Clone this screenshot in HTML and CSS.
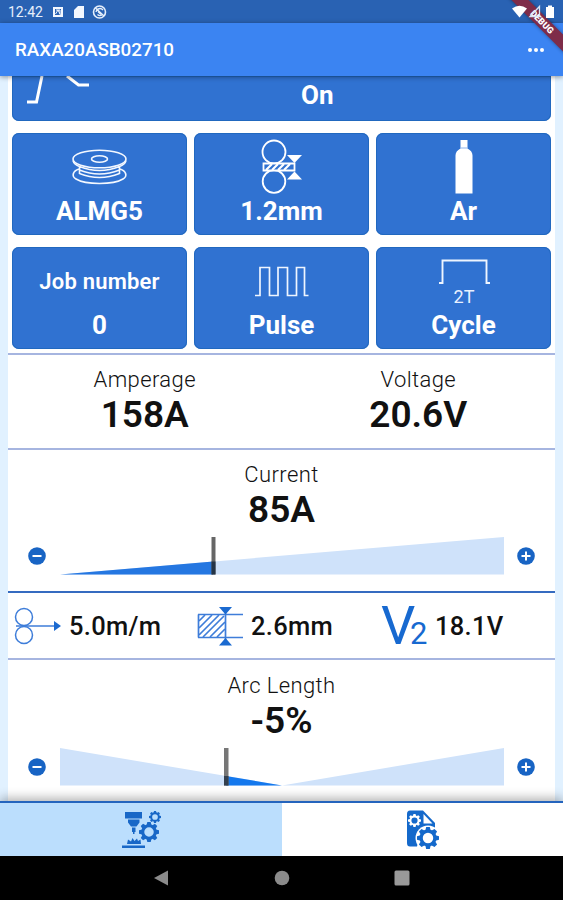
FILE: index.html
```html
<!DOCTYPE html>
<html lang="en">
<head>
<meta charset="utf-8">
<title>RAXA20ASB02710</title>
<link rel="stylesheet" href="styles.css">
</head>
<body>
<svg width="0" height="0" class="defs">
  <symbol id="gear" viewBox="-12 -12 24 24">
    <circle r="7.500" fill="none" stroke="currentColor" stroke-width="3.600"/>
    <g fill="currentColor">
      <path id="tooth" d="M-3-8-2-12H2L3-8Z"/>
      <use href="#tooth" transform="rotate(45)"/><use href="#tooth" transform="rotate(90)"/>
      <use href="#tooth" transform="rotate(135)"/><use href="#tooth" transform="rotate(180)"/>
      <use href="#tooth" transform="rotate(225)"/><use href="#tooth" transform="rotate(270)"/>
      <use href="#tooth" transform="rotate(315)"/>
    </g>
  </symbol>
</svg>
<div class="phone">
  <div class="status">
    <span class="clock">12:42</span>
    <svg class="status-left" width="56" height="14" viewBox="0 0 56 14">
      <path fill="#f4f8ff" fill-rule="evenodd" d="M1 2h10v10H1ZM3 4v6h6V4Z"/><path d="M3.500 9 6 5l2.500 5M4 5h4v4" fill="none" stroke="#f4f8ff" stroke-width="1"/>
      <path fill="#f4f8ff" d="M26 1h6v12H22V5Z"/>
      <circle cx="47.500" cy="7" r="6" fill="none" stroke="#e6effb" stroke-width="1.600"/>
      <path d="M43.500 3 52 11M44 7a4 4 0 0 1 7-2M45.500 9.500q2 2 4.500.5M46 6.500l3 3" fill="none" stroke="#e6effb" stroke-width="1.400"/>
    </svg>
    <svg class="status-right" width="44" height="16" viewBox="0 0 44 16">
      <path fill="#fff" d="M0 4.500Q7.500-1 15 4.500L7.500 13.500Z"/>
      <path d="M18 12.500 27.500 2.500V12.500Z" fill="none" stroke="#d9e5f7" stroke-width="1.300"/>
      <path fill="#fff" d="M36 1.500h4V3h2v11h-8V3H36Z"/>
    </svg>
  </div>
  <div class="appbar"><h1>RAXA20ASB02710</h1><span class="more"><i></i><i></i><i></i></span></div>
  <div class="ribbon">DEBUG</div>

  <main class="screen">
    <div class="panel">
      <section class="tiles">
        <div class="tile wide">
          <svg class="ramp" width="64" height="30" viewBox="0 0 64 30"><path d="M0 26H9.500L15 0M40 0 51.500 9H62" fill="none" stroke="#fff" stroke-width="3"/></svg>
          <b>On</b>
        </div>
        <div class="tile">
          <svg width="58" height="56" viewBox="0 0 58 56" fill="none" stroke="#f3f8ff" stroke-width="1.600">
            <ellipse cx="28.500" cy="21" rx="26.500" ry="8.800"/><ellipse cx="28.500" cy="21" rx="8" ry="3.200"/>
            <path d="M2 22.500q1 4 6.500 6V36M55 22.500q-1 4-6.500 6V36M8.500 28.500q20 8 40 0M8.500 32q20 8 40 0M8.500 35.500q20 8 40 0M8 31C2 33 0 38 5 41c10 6 37 6 47 0 5-3 3-8-3-10"/>
          </svg>
          <b>ALMG5</b>
        </div>
        <div class="tile">
          <svg width="58" height="56" viewBox="0 0 58 56" fill="none" stroke="#fff" stroke-width="1.800">
            <circle cx="21" cy="14" r="11.500"/><circle cx="21" cy="43.500" r="11.300"/>
            <path d="M10.500 25.500h31v7h-31Z" fill="#3072d1"/>
            <path d="m13 32 6-6m0 6 6-6m0 6 6-6m0 6 6-6" stroke-width="2.200"/>
            <path d="M34 17h15L41.500 25Zm0 24.500h15L41.500 33.500Z" fill="#fff" stroke="none"/>
          </svg>
          <b>1.2mm</b>
        </div>
        <div class="tile">
          <svg width="58" height="56" viewBox="0 0 58 56"><path d="M25.500 2h7v8.500q5 2.500 5 7V55.500H20.500V17.500q0-4.500 5-7Z" fill="#fff"/><path d="M25 10h8" stroke="#8fb5ec"/></svg>
          <b>Ar</b>
        </div>
        <div class="tile"><span class="caption">Job number</span><b>0</b></div>
        <div class="tile">
          <svg width="58" height="56" viewBox="0 0 58 56"><path d="M2 43.500H7V15.500H16.500V43.500H25V15.500H34.500V43.500H43.500V15.500H51.500V43.500H55.500" fill="none" stroke="#eef5ff" stroke-width="1.700"/></svg>
          <b>Pulse</b>
        </div>
        <div class="tile">
          <svg width="58" height="56" viewBox="0 0 58 56"><path d="M4 31H7.500V8.500H51.500V31H55" fill="none" stroke="#eef5ff" stroke-width="1.900"/><text x="29" y="51" class="mode">2T</text></svg>
          <b>Cycle</b>
        </div>
      </section>

      <section class="readings">
        <div class="reading"><span>Amperage</span><strong>158A</strong></div>
        <div class="reading"><span>Voltage</span><strong>20.6V</strong></div>
      </section>

      <section class="control current">
        <div class="reading"><span>Current</span><strong>85A</strong></div>
        <div class="slider">
          <button class="step" aria-label="Decrease"><svg width="18" height="18" viewBox="0 0 18 18"><circle cx="9" cy="9" r="8.800"/><path d="M4.500 9h9"/></svg></button>
          <svg class="track" width="444" height="39" viewBox="0 0 444 39">
            <path d="M0 38.500 444 1V38.500Z" fill="#cfe2fa"/><path d="M0 38.500 153 25.600V38.500Z" fill="#2577e1"/><path d="M151.500 1h4v37.500h-4Z" fill="#666"/><path d="M151.500 25.500h4v13h-4Z" fill="#243447"/>
          </svg>
          <button class="step" aria-label="Increase"><svg width="18" height="18" viewBox="0 0 18 18"><circle cx="9" cy="9" r="8.800"/><path d="M4.500 9h9M9 4.500v9"/></svg></button>
        </div>
      </section>

      <section class="facts">
        <div class="fact speed">
          <svg width="48" height="40" viewBox="0 0 48 40"><g fill="none" stroke="#3e7dd9" stroke-width="1.500"><circle cx="10" cy="11" r="8.500"/><circle cx="10" cy="29" r="8.500"/><path d="M2 20H41"/></g><path d="M40 15 47 20 40 25Z" fill="#1b6ad0"/></svg>
          <b>5.0m/m</b>
        </div>
        <div class="fact thickness">
          <svg width="47" height="40" viewBox="0 0 47 40"><g fill="none" stroke="#3e7dd9" stroke-width="1.700"><path d="M1 8.500H46M1 31.500H46M1.500 8.500V31.500M28.500 4V36"/><path d="m2 15 6-6M2 22 15 9M2 29 22 9M6 31 27 10M13 31 28 16M20 31l8-8"/></g><path d="M22 1H35L28.500 8.500ZM22 39.500H35L28.500 32Z" fill="#1b6ad0"/></svg>
          <b>2.6mm</b>
        </div>
        <div class="fact volts">
          <span class="v-big">V</span><span class="v-small">2</span>
          <b>18.1V</b>
        </div>
      </section>

      <section class="control arc">
        <div class="reading"><span>Arc Length</span><strong>-5%</strong></div>
        <div class="slider">
          <button class="step" aria-label="Decrease"><svg width="18" height="18" viewBox="0 0 18 18"><circle cx="9" cy="9" r="8.800"/><path d="M4.500 9h9"/></svg></button>
          <svg class="track" width="444" height="39" viewBox="0 0 444 39">
            <path d="M0 1 222 38.500H0ZM444 1 222 38.500H444Z" fill="#cfe2fa"/><path d="M166 29 222 38.500H166Z" fill="#1478ed"/><path d="M164 1h4.500v37.500H164Z" fill="#777"/><path d="M164 29h4.500v9.500H164Z" fill="#34404f"/>
          </svg>
          <button class="step" aria-label="Increase"><svg width="18" height="18" viewBox="0 0 18 18"><circle cx="9" cy="9" r="8.800"/><path d="M4.500 9h9M9 4.500v9"/></svg></button>
        </div>
      </section>
    </div>
  </main>

  <nav class="tabs">
    <a class="tab active">
      <svg width="40" height="40" viewBox="0 0 40 40" color="#1867c7">
        <g fill="currentColor"><path d="M4 2H21V8.500H4ZM7 9.500H18.500V12.500L15.500 16.500H10L7 12.500ZM11 17.500H14.500V22H13.500V24H12V22H11ZM1 35.500H24V38H1ZM6 34 7 29.500 10 31.500 11.500 28 13.500 31 16 28.500 17 31 19.500 29.500 20 34Z"/></g>
        <use href="#gear" x="28" y="1" width="12" height="12"/><use href="#gear" x="18" y="12" width="20" height="20"/>
      </svg>
    </a>
    <a class="tab">
      <svg width="40" height="40" viewBox="0 0 40 40" color="#1469cb">
        <path d="M8 .5H21L33 13V17H5V4Q5 .5 8 .5ZM5 14H33V18.500H20L15 36.500H8Q5 36.500 5 33Z" fill="currentColor"/>
        <path d="M21.500 4V13.500H30.500Z" fill="#fff"/>
        <g color="#fff"><use href="#gear" x="6" y="4" width="13" height="13"/></g>
        <circle cx="26" cy="28" r="12.500" fill="#fff"/>
        <use href="#gear" x="15" y="17" width="22" height="22"/>
      </svg>
    </a>
  </nav>
  <div class="system">
    <svg width="16" height="18" viewBox="0 0 16 18"><path d="M14 1.500V16.500L0 9Z" fill="#8b8b8b"/></svg>
    <svg width="16" height="18" viewBox="0 0 16 18"><circle cx="8" cy="9" r="7.300" fill="#8b8b8b"/></svg>
    <svg width="16" height="18" viewBox="0 0 16 18"><rect x=".5" y="1.500" width="15" height="15" rx="1.500" fill="#999"/></svg>
  </div>
</div>
</body>
</html>
```
FILE: styles.css
```css
* { box-sizing: border-box; }
body { margin: 0; font-family: Roboto, "Liberation Sans", sans-serif; }
svg { display: block; flex: none; }
.defs { position: absolute; }
.phone { position: relative; width: 563px; height: 900px; display: flex; flex-direction: column; overflow: hidden; background: #000; }

.status { height: 23px; flex: none; background: #2962b3; color: #e6effb; display: flex; align-items: center; padding: 1px 7px 0 8px; }
.clock { font-size: 14px; width: 44px; }
.status-right { margin-left: auto; position: relative; z-index: 3; }
.appbar { height: 53px; flex: none; background: #3b84f2; color: #fff; display: flex; align-items: center; justify-content: space-between; padding: 0 19px 0 15px; position: relative; z-index: 1; box-shadow: 0 1px 5px rgba(0, 0, 0, .4); }
.appbar h1 { margin: 0; font-size: 18.800px; font-weight: 500; }
.more { display: flex; gap: 2px; }
.more i { width: 4px; height: 4px; border-radius: 50%; background: #fff; }
.ribbon { position: absolute; z-index: 2; left: 482px; top: 16px; width: 120px; height: 12px; line-height: 12px; text-align: center; transform: rotate(45deg); background: #7e2c49; color: #fff; font-size: 9px; font-weight: 900; box-shadow: 0 0 4px rgba(0, 0, 0, .4); }

.screen { height: 725px; flex: none; background: #e1f1ff; padding: 0 8px; overflow: hidden; }
.panel { background: #fff; height: 100%; }
.tiles { display: grid; grid-template-columns: repeat(3, 1fr); grid-template-rows: 45px 102px 102px; row-gap: 12px; column-gap: 7px; padding: 0 4px; height: 277px; }
.tile { background: #3072d1; border-radius: 7px; box-shadow: inset 0 0 0 1px #2168bf; color: #fff; display: flex; flex-direction: column; align-items: center; padding-top: 5px; }
.tile b { font-size: 26px; line-height: 30px; margin-top: 1.500px; }
.tile.wide { grid-column: 1 / -1; flex-direction: row; align-items: flex-start; padding: 0 0 0 15px; border-radius: 0 0 7px 7px; }
.tile.wide b { margin: 4px 0 0 210px; }
.caption { height: 56px; padding-top: 17px; font-size: 22px; line-height: 26px; font-weight: 600; letter-spacing: .2px; }
.mode { font-size: 18px; fill: #e8f1ff; text-anchor: middle; }

.readings { display: grid; grid-template-columns: 1fr 1fr; height: 95px; border-top: 2px solid #a6b5e0; padding-top: 12px; }
.reading { display: flex; flex-direction: column; align-items: center; color: #111; }
.reading span { font-size: 22px; line-height: 26px; font-weight: 300; letter-spacing: .4px; }
.reading strong { font-size: 37px; line-height: 42px; font-weight: 560; margin-top: 1px; }
.control { border-top: 2px solid #a6b5e0; padding-top: 12px; }
.current { height: 143px; padding-top: 11.500px; }
.slider { display: flex; align-items: center; justify-content: space-between; padding: 0 20px; margin-top: 5.500px; height: 39px; }
.step { border: 0; padding: 0; background: none; }
.step svg { fill: #1864c4; stroke: #fff; stroke-width: 2; }
.step circle { stroke: none; }
.facts { display: grid; grid-template-columns: 182px 184px 1fr; height: 67px; border-top: 2px solid #356bc0; align-items: center; }
.fact { display: flex; align-items: center; }
.fact b { font-size: 25.500px; line-height: 30px; font-weight: 550; letter-spacing: .3px; color: #111; padding-top: 1px; }
.speed { padding-left: 6px; gap: 7px; }
.thickness { padding-left: 7px; gap: 7px; }
.volts { padding-left: 7px; align-items: baseline; color: #1769d0; }
.v-big { width: 29px; font-size: 54px; line-height: 60px; font-weight: 400; }
.v-small { width: 25px; font-size: 31px; line-height: 32px; font-weight: 400; }
.volts b { position: relative; top: -9px; }
.arc { height: 145px; padding-top: 12.500px; }

.tabs { display: flex; height: 55px; flex: none; border-top: 2px solid #2464bd; position: relative; z-index: 1; box-shadow: 0 -3px 10px rgba(0, 0, 0, .3); }
.tab { flex: 1; background: #fff; display: flex; justify-content: center; padding-top: 7px; }
.tab.active { background: #bbdefd; }
.system { flex: 1; display: flex; align-items: center; justify-content: center; gap: 104px; }
```
